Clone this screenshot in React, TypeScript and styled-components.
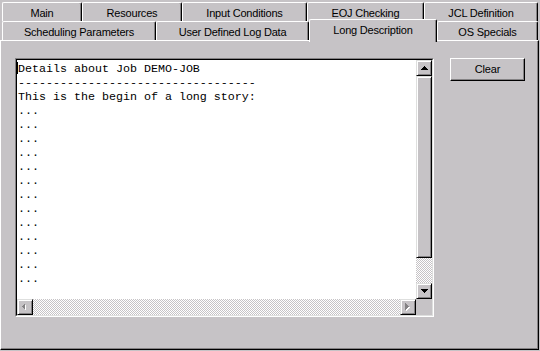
import React from 'react';
import styled, { createGlobalStyle } from 'styled-components';

const FACE = '#c6c3c6';
const SHADOW = '#848284';
const HILITE = '#dedfde';

type TTab = { label: string; width: number; active?: boolean };

const topTabs: TTab[] = [
  { label: 'Main', width: 80 },
  { label: 'Resources', width: 100 },
  { label: 'Input Conditions', width: 125 },
  { label: 'EOJ Checking', width: 117 },
  { label: 'JCL Definition', width: 114 },
];

const bottomTabs: TTab[] = [
  { label: 'Scheduling Parameters', width: 154 },
  { label: 'User Defined Log Data', width: 153 },
  { label: 'Long Description', width: 128, active: true },
  { label: 'OS Specials', width: 101 },
];

const lines = [
  'Details about Job DEMO-JOB',
  '-'.repeat(34),
  'This is the begin of a long story:',
  ...Array.from({ length: 13 }, () => '...'),
];

const ArrowUp = () => (
  <svg width="7" height="4" shapeRendering="crispEdges">
    <rect x="3" y="0" width="1" height="1" fill="#000" />
    <rect x="2" y="1" width="3" height="1" fill="#000" />
    <rect x="1" y="2" width="5" height="1" fill="#000" />
    <rect x="0" y="3" width="7" height="1" fill="#000" />
  </svg>
);

const ArrowDown = () => (
  <svg width="7" height="4" shapeRendering="crispEdges">
    <rect x="0" y="0" width="7" height="1" fill="#000" />
    <rect x="1" y="1" width="5" height="1" fill="#000" />
    <rect x="2" y="2" width="3" height="1" fill="#000" />
    <rect x="3" y="3" width="1" height="1" fill="#000" />
  </svg>
);

// disabled arrows: gray glyph with a white emboss
const ArrowLeftDisabled = () => (
  <svg width="6" height="8" shapeRendering="crispEdges">
    <polygon points="4,1 4,8 1,4.5" fill="#fff" />
    <polygon points="3,0 3,7 0,3.5" fill={SHADOW} />
  </svg>
);

const ArrowRightDisabled = () => (
  <svg width="6" height="8" shapeRendering="crispEdges">
    <polygon points="1,1 1,8 5,4.5" fill="#fff" />
    <polygon points="0,0 0,7 4,3.5" fill={SHADOW} />
  </svg>
);

const App = () => {
  return (
    <>
      <GlobalStyle />
      <Window>
        <TabRow>
          {topTabs.map((t) => (
            <Tab key={t.label} $width={t.width}>
              {t.label}
            </Tab>
          ))}
        </TabRow>
        <TabRow>
          {bottomTabs.map((t) => (
            <Tab key={t.label} $width={t.width} $active={t.active}>
              {t.label}
            </Tab>
          ))}
        </TabRow>
        <Panel>
          <TextFrame>
            <TextFrameInner>
              <TextBody>
                {lines.map((l, i) => (
                  <Line key={i}>
                    {i === 0 && <Caret />}
                    {l}
                  </Line>
                ))}
              </TextBody>
              <VScroll>
                <ScrollButton>
                  <ArrowUp />
                </ScrollButton>
                <Thumb $size={182} />
                <Track />
                <ScrollButton>
                  <ArrowDown />
                </ScrollButton>
              </VScroll>
              <HScroll>
                <ScrollButton>
                  <ArrowLeftDisabled />
                </ScrollButton>
                <Track />
                <ScrollButton>
                  <ArrowRightDisabled />
                </ScrollButton>
              </HScroll>
              <Corner />
            </TextFrameInner>
          </TextFrame>
          <PushButton>Clear</PushButton>
        </Panel>
      </Window>
    </>
  );
};

export default App;

const GlobalStyle = createGlobalStyle`
  html, body {
    margin: 0;
    padding: 0;
    background: ${FACE};
  }
  body {
    font-family: "Liberation Sans", Arial, sans-serif;
    font-size: 11px;
    color: #000;
  }
`;

const Window = styled.div`
  width: 539px;
  padding-top: 2px;
  display: flex;
  flex-direction: column;
`;

const TabRow = styled.div`
  display: flex;
  height: 19px;
  padding-left: 2px;
`;

const Tab = styled.div<{ $width: number; $active?: boolean }>`
  position: relative;
  z-index: ${({ $active }) => ($active ? 2 : 0)};
  box-sizing: border-box;
  flex: 0 0 ${({ $width }) => $width}px;
  height: ${({ $active }) => ($active ? 23 : 19)}px;
  margin-top: ${({ $active }) => ($active ? -2 : 0)}px;
  padding-top: 2px;
  background: ${FACE};
  border-top: 1px solid #fff;
  border-left: 1px solid #fff;
  border-right: 1px solid #000;
  border-radius: 2px 2px 0 0;
  box-shadow: inset -1px 0 ${SHADOW};
  text-align: center;
  line-height: 16px;
  letter-spacing: -0.2px;
  white-space: nowrap;
`;

const Panel = styled.div`
  box-sizing: border-box;
  width: 539px;
  height: 310px;
  border-top: 1px solid #fff;
  border-left: 1px solid #fff;
  border-right: 1px solid #000;
  border-bottom: 1px solid #000;
  box-shadow: inset -1px -1px ${SHADOW};
  padding: 17px 0 0 14px;
  display: flex;
  align-items: flex-start;
  gap: 16px;
`;

const TextFrame = styled.div`
  box-sizing: border-box;
  width: 419px;
  height: 259px;
  border: 1px solid;
  border-color: ${SHADOW} #fff #fff ${SHADOW};
`;

const TextFrameInner = styled.div`
  box-sizing: border-box;
  width: 100%;
  height: 100%;
  border: 1px solid;
  border-color: #000 ${HILITE} ${HILITE} #000;
  display: grid;
  grid-template-columns: 1fr 16px;
  grid-template-rows: 1fr 16px;
`;

const TextBody = styled.div`
  background: #fff;
  padding: 2px 0 0 1px;
  overflow: hidden;
  font-family: "Liberation Mono", "Courier New", monospace;
  font-size: 11.67px;
  line-height: 14px;
  white-space: pre;
`;

const Line = styled.div`
  height: 14px;
`;

const Caret = styled.span`
  display: inline-block;
  width: 1px;
  height: 12px;
  margin-left: -1px;
  background: #000;
  vertical-align: -2px;
`;

const VScroll = styled.div`
  display: flex;
  flex-direction: column;
`;

const HScroll = styled.div`
  display: flex;
`;

const ScrollButton = styled.div`
  box-sizing: border-box;
  flex: 0 0 16px;
  width: 16px;
  height: 16px;
  background: ${FACE};
  border: 1px solid;
  border-color: ${HILITE} #000 #000 ${HILITE};
  box-shadow: inset 1px 1px #fff, inset -1px -1px ${SHADOW};
  display: flex;
  align-items: center;
  justify-content: center;
  svg {
    display: block;
  }
`;

const Thumb = styled.div<{ $size: number }>`
  box-sizing: border-box;
  flex: 0 0 ${({ $size }) => $size}px;
  background: ${FACE};
  border: 1px solid;
  border-color: ${HILITE} #000 #000 ${HILITE};
  box-shadow: inset 1px 1px #fff, inset -1px -1px ${SHADOW};
`;

const Track = styled.div`
  flex: 1 1 auto;
  background-color: ${FACE};
  background-image: conic-gradient(#fff 25%, ${FACE} 0 50%, #fff 0 75%, ${FACE} 0);
  background-size: 2px 2px;
`;

const Corner = styled.div`
  background: ${FACE};
`;

const PushButton = styled.div`
  box-sizing: border-box;
  width: 75px;
  height: 23px;
  background: ${FACE};
  border: 1px solid;
  border-color: #fff #000 #000 #fff;
  box-shadow: inset -1px -1px ${SHADOW};
  text-align: center;
  line-height: 21px;
  letter-spacing: -0.2px;
`;
